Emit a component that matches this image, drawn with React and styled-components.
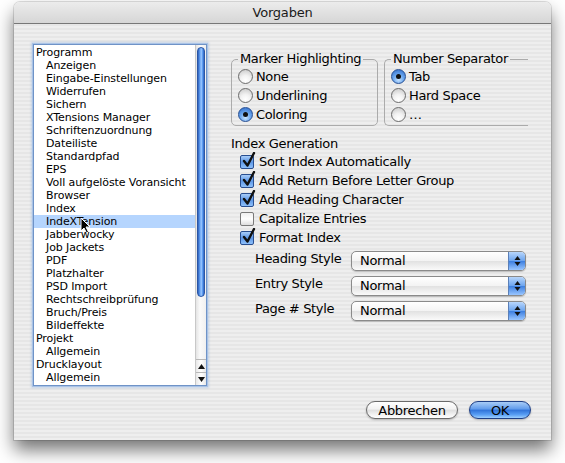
import React from "react";
import styled, { createGlobalStyle, css } from "styled-components";

const Global = createGlobalStyle`
  html, body { margin: 0; padding: 0; background: #fff; }
  body { font-family: "DejaVu Sans", "Lucida Grande", sans-serif; color: #000; }
  * { box-sizing: border-box; }
`;

const pinstripe = css`
  background: repeating-linear-gradient(to bottom, #eeeeee 0 2px, #e6e6e6 2px 4px);
`;

const Page = styled.div`
  padding: 2px 0 0 14px;
  width: 565px;
  height: 463px;
`;

const Window = styled.div`
  width: 537px;
  height: 438px;
  border-radius: 6px 6px 0 0;
  overflow: hidden;
  box-shadow: 0 10px 18px rgba(0, 0, 0, 0.55), 0 0 0 1px rgba(0, 0, 0, 0.12);
  display: flex;
  flex-direction: column;
  ${pinstripe}
`;

const TitleBar = styled.div`
  height: 22px;
  flex: none;
  display: flex;
  align-items: center;
  justify-content: center;
  font-size: 13px;
  color: #1a1a1a;
  background: linear-gradient(to bottom, #ececec, #d6d6d6);
  border-bottom: 1px solid #777;
  letter-spacing: -0.2px;
`;

const Body = styled.div`
  flex: 1;
  display: flex;
  flex-direction: column;
  padding: 20px 20px 0 19px;
`;

const Main = styled.div`
  display: flex;
  gap: 24px;
`;

const ListBox = styled.div`
  width: 174px;
  height: 342px;
  border: 1px solid #6f93c7;
  box-shadow: 0 0 0 1px #a9c3e6, 0 0 2px 2px rgba(120, 160, 220, 0.35);
  background: #fff;
  display: flex;
`;

const ListItems = styled.div`
  flex: 1;
  padding-top: 1px;
  font-size: 11px;
  letter-spacing: -0.1px;
  overflow: hidden;
`;

const Item = styled.div`
  height: 13px;
  line-height: 13px;
  padding-left: ${(p) => (p.$child ? 12 : 2)}px;
  background: ${(p) => (p.$selected ? "#b5d5fe" : "transparent")};
  white-space: nowrap;
  position: relative;
`;

const Scrollbar = styled.div`
  width: 11px;
  display: flex;
  flex-direction: column;
  background: linear-gradient(to right, #e4e4e4, #fafafa 40%, #f0f0f0);
  border-left: 1px solid #c8c8c8;
`;

const ScrollTrack = styled.div`
  flex: 1;
  padding: 2px 0 0 0;
  display: flex;
  flex-direction: column;
`;

const Thumb = styled.div`
  height: 250px;
  margin: 0 1px;
  border-radius: 5px;
  background: linear-gradient(to right, #2f5fb8, #5d9cf0 30%, #9bc7ff 55%, #5d9cf0 75%, #2f63bf);
  border: 1px solid #2a56a6;
`;

const ArrowBtn = styled.div`
  height: 13px;
  display: flex;
  align-items: center;
  justify-content: center;
  border-top: 1px solid #b8b8b8;
  background: linear-gradient(to right, #e8e8e8, #ffffff 50%, #e8e8e8);
`;

const Right = styled.div`
  display: flex;
  flex-direction: column;
  padding-top: 8px;
`;

const GroupRow = styled.div`
  display: flex;
  gap: 6px;
`;

const Group = styled.fieldset`
  margin: 0;
  width: ${(p) => p.$w}px;
  height: 74px;
  padding: 1px 0 0 6px;
  border: 1px solid #ababab;
  border-radius: 5px;
  ${(p) => p.$open && "border-right: none; border-top-right-radius: 0; border-bottom-right-radius: 0;"}
  display: flex;
  flex-direction: column;
`;

const Legend = styled.legend`
  font-size: 13px;
  padding: 0 2px;
  margin-left: 0;
  line-height: 14px;
  letter-spacing: -0.35px;
`;

const OptionRow = styled.label`
  display: flex;
  align-items: center;
  height: 19px;
  font-size: 13px;
  letter-spacing: -0.35px;
  gap: 3px;
`;

const RadioCircle = styled.span`
  width: 15px;
  height: 15px;
  border-radius: 50%;
  display: flex;
  align-items: center;
  justify-content: center;
  border: 1px solid ${(p) => (p.$on ? "#274f93" : "#6c6c6c")};
  background: ${(p) =>
    p.$on
      ? "radial-gradient(circle at 50% 75%, #c8e4ff 0%, #6aa6ee 45%, #2a66c4 100%)"
      : "radial-gradient(circle at 50% 80%, #ffffff 0%, #f2f2f2 40%, #c4c4c4 100%)"};
  &::after {
    content: "";
    width: 5px;
    height: 5px;
    border-radius: 50%;
    background: #111;
    display: ${(p) => (p.$on ? "block" : "none")};
  }
`;

const SectionLabel = styled.div`
  margin-top: 9px;
  font-size: 13px;
  letter-spacing: -0.35px;
  height: 18px;
  line-height: 18px;
`;

const Checks = styled.div`
  display: flex;
  flex-direction: column;
  padding-left: 9px;
  margin-top: -1px;
`;

const CheckBoxBox = styled.span`
  width: 14px;
  height: 14px;
  border-radius: 2px;
  position: relative;
  border: 1px solid ${(p) => (p.$on ? "#284e90" : "#7a7a7a")};
  background: ${(p) =>
    p.$on
      ? "linear-gradient(to bottom, #a9cdf8, #5d97e6 50%, #8ec0fb)"
      : "linear-gradient(to bottom, #f0f0f0, #ffffff 50%, #dedede)"};
  svg {
    position: absolute;
    left: 1px;
    top: -4px;
  }
`;

const CheckRow = styled(OptionRow)`
  gap: 5px;
`;

const Popups = styled.div`
  display: grid;
  grid-template-columns: 96px 175px;
  row-gap: 5px;
  margin-top: 4px;
  padding-left: 24px;
  align-items: center;
`;

const PopLabel = styled.div`
  font-size: 13px;
  letter-spacing: -0.35px;
  margin-top: -5px;
`;

const Popup = styled.div`
  height: 20px;
  border: 1px solid #8a8a8a;
  border-radius: 5px;
  display: flex;
  overflow: hidden;
  box-shadow: 0 1px 1px rgba(0, 0, 0, 0.2);
  background: linear-gradient(to bottom, #ffffff, #f3f3f3 50%, #e2e2e2 52%, #fafafa);
`;

const PopText = styled.div`
  flex: 1;
  font-size: 13px;
  padding-left: 8px;
  line-height: 18px;
  letter-spacing: -0.3px;
`;

const PopArrows = styled.div`
  width: 17px;
  border-left: 1px solid #5a7fb8;
  display: flex;
  align-items: center;
  justify-content: center;
  background: linear-gradient(to bottom, #b8d6fb, #6aa3ee 50%, #3e80e0 52%, #9ac6ff);
`;

const ButtonRow = styled.div`
  display: flex;
  justify-content: flex-end;
  gap: 11px;
  margin-top: 15px;
`;

const Button = styled.div`
  height: 18px;
  width: ${(p) => p.$w}px;
  border-radius: 9px;
  display: flex;
  align-items: center;
  justify-content: center;
  font-size: 13px;
  letter-spacing: -0.3px;
  border: 1px solid ${(p) => (p.$primary ? "#1e3f86" : "#6a6a6a")};
  box-shadow: 0 1px 2px rgba(0, 0, 0, 0.25);
  background: ${(p) =>
    p.$primary
      ? "linear-gradient(to bottom, #a8ccf7, #5f9aeb 45%, #2f72d8 50%, #5aa0f5 80%, #9ed0ff)"
      : "linear-gradient(to bottom, #ffffff, #f2f2f2 45%, #dedede 50%, #f4f4f4 80%, #ffffff)"};
`;

const Cursor = styled.svg`
  position: absolute;
  left: 46px;
  top: 2px;
`;

const items = [
  ["Programm", false],
  ["Anzeigen", true],
  ["Eingabe-Einstellungen", true],
  ["Widerrufen", true],
  ["Sichern", true],
  ["XTensions Manager", true],
  ["Schriftenzuordnung", true],
  ["Dateiliste", true],
  ["Standardpfad", true],
  ["EPS", true],
  ["Voll aufgelöste Voransicht", true],
  ["Browser", true],
  ["Index", true],
  ["IndeXTension", true, true],
  ["Jabberwocky", true],
  ["Job Jackets", true],
  ["PDF", true],
  ["Platzhalter", true],
  ["PSD Import", true],
  ["Rechtschreibprüfung", true],
  ["Bruch/Preis", true],
  ["Bildeffekte", true],
  ["Projekt", false],
  ["Allgemein", true],
  ["Drucklayout", false],
  ["Allgemein", true],
];

const Radio = ({ on, children }) => (
  <OptionRow>
    <RadioCircle $on={on} />
    {children}
  </OptionRow>
);

const Check = ({ on, children }) => (
  <CheckRow>
    <CheckBoxBox $on={on}>
      {on && (
        <svg width="14" height="16" viewBox="0 0 14 16">
          <path d="M2 9 L5.5 13.5 L12 1" fill="none" stroke="#111" strokeWidth="2.4" strokeLinecap="round" strokeLinejoin="round" />
        </svg>
      )}
    </CheckBoxBox>
    {children}
  </CheckRow>
);

const Arrows = () => (
  <svg width="7" height="12" viewBox="0 0 7 12">
    <path d="M3.5 1 L6.5 5 L0.5 5 Z" fill="#111" />
    <path d="M3.5 11 L6.5 7 L0.5 7 Z" fill="#111" />
  </svg>
);

const PopupSelect = ({ label }) => (
  <>
    <PopLabel>{label}</PopLabel>
    <Popup>
      <PopText>Normal</PopText>
      <PopArrows>
        <Arrows />
      </PopArrows>
    </Popup>
  </>
);

export default function App() {
  return (
    <Page>
      <Global />
      <Window>
        <TitleBar>Vorgaben</TitleBar>
        <Body>
          <Main>
            <ListBox>
              <ListItems>
                {items.map(([t, child, sel], i) => (
                  <Item key={i} $child={child} $selected={sel}>
                    {t}
                    {sel && (
                      <Cursor width="11" height="17" viewBox="0 0 11 17">
                        <path d="M1 1 L1 14 L4 11 L6.5 16 L8.5 15 L6 10 L10 10 Z" fill="#000" stroke="#fff" strokeWidth="1" />
                      </Cursor>
                    )}
                  </Item>
                ))}
              </ListItems>
              <Scrollbar>
                <ScrollTrack>
                  <Thumb />
                </ScrollTrack>
                <ArrowBtn>
                  <svg width="7" height="5" viewBox="0 0 7 5"><path d="M3.5 0 L7 5 L0 5 Z" fill="#111" /></svg>
                </ArrowBtn>
                <ArrowBtn>
                  <svg width="7" height="5" viewBox="0 0 7 5"><path d="M3.5 5 L7 0 L0 0 Z" fill="#111" /></svg>
                </ArrowBtn>
              </Scrollbar>
            </ListBox>
            <Right>
              <GroupRow>
                <Group $w={147}>
                  <Legend>Marker Highlighting</Legend>
                  <Radio>None</Radio>
                  <Radio>Underlining</Radio>
                  <Radio on>Coloring</Radio>
                </Group>
                <Group $w={144} $open>
                  <Legend>Number Separator</Legend>
                  <Radio on>Tab</Radio>
                  <Radio>Hard Space</Radio>
                  <Radio>…</Radio>
                </Group>
              </GroupRow>
              <SectionLabel>Index Generation</SectionLabel>
              <Checks>
                <Check on>Sort Index Automatically</Check>
                <Check on>Add Return Before Letter Group</Check>
                <Check on>Add Heading Character</Check>
                <Check>Capitalize Entries</Check>
                <Check on>Format Index</Check>
              </Checks>
              <Popups>
                <PopupSelect label="Heading Style" />
                <PopupSelect label="Entry Style" />
                <PopupSelect label="Page # Style" />
              </Popups>
            </Right>
          </Main>
          <ButtonRow>
            <Button $w={92}>Abbrechen</Button>
            <Button $w={62} $primary>OK</Button>
          </ButtonRow>
        </Body>
      </Window>
    </Page>
  );
}
